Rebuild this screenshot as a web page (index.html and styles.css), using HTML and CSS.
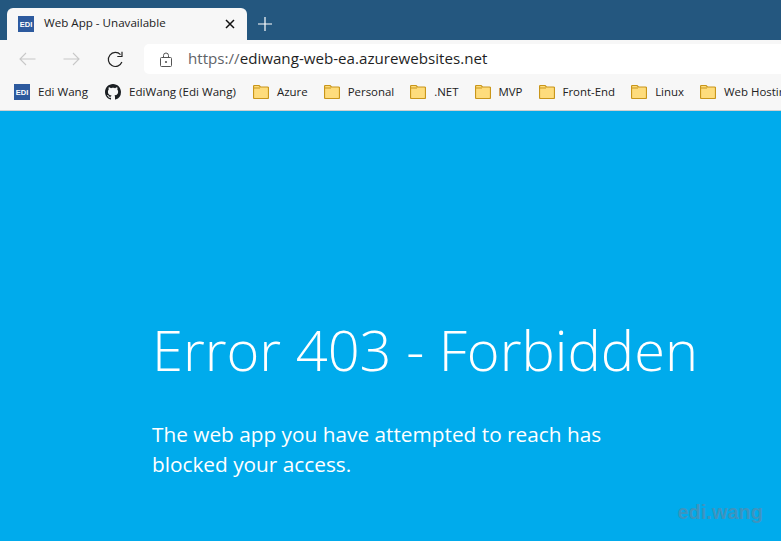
FILE: index.html
```html
<!DOCTYPE html>
<html lang="en">
<head>
<meta charset="utf-8">
<title>Web App - Unavailable</title>
<link rel="stylesheet" href="styles.css">
</head>
<body>
<svg class="defs" width="0" height="0"><defs><symbol id="folder" viewBox="0 0 16 14"><path d="M1.500.5h4.500l1.500 1.500h7a1 1 0 0 1 1 1v9.500a1 1 0 0 1-1 1h-13a1 1 0 0 1-1-1v-11a1 1 0 0 1 1-1z" fill="#fedc7c" stroke="#c9961a" stroke-width="1.200"/><path d="M1 3h6" stroke="#c9961a" fill="none"/></symbol></defs></svg>
<div class="window">
  <div class="tabstrip">
    <div class="tab">
      <span class="edi">EDI</span>
      <span class="tab-title">Web App - Unavailable</span>
      <svg class="tab-close" width="10" height="10" viewBox="0 0 10 10"><path d="M1 1l8 8M9 1l-8 8" stroke="#111" stroke-width="1.5" fill="none"/></svg>
    </div>
    <svg class="newtab" width="14" height="14" viewBox="0 0 14 14"><path d="M7 0v14M0 7h14" stroke="#fff" stroke-width="1.2" fill="none"/></svg>
  </div>
  <div class="toolbar">
    <svg class="nav" width="17" height="14" viewBox="0 0 17 14"><path d="M16.500 7H1M7 1L1 7l6 6" stroke="#c8c8c8" stroke-width="1.100" fill="none"/></svg>
    <svg class="nav nav-forward" width="17" height="14" viewBox="0 0 17 14"><path d="M.5 7H16M10 1l6 6-6 6" stroke="#c8c8c8" stroke-width="1.100" fill="none"/></svg>
    <svg class="nav nav-reload" width="17" height="17" viewBox="0 0 17 17"><path d="M14.900 11A7 7 0 1 1 13.500 3.700" stroke="#222" stroke-width="1.200" fill="none"/><path d="M15 .8v4.700h-4.700" stroke="#222" stroke-width="1.200" fill="none"/></svg>
    <div class="omnibox">
      <svg class="lock" width="12" height="15" viewBox="0 0 12 15"><path d="M3.500 5.500V3.500a2.500 2.500 0 0 1 5 0v2M1.500 5.500h9a1 1 0 0 1 1 1v7a1 1 0 0 1-1 1h-9a1 1 0 0 1-1-1v-7a1 1 0 0 1 1-1z" stroke="#555" stroke-width="1" fill="none"/><circle cx="6" cy="10" r="1.100" fill="#555"/></svg>
      <span class="url">https://<span class="url-host">ediwang-web-ea.azurewebsites.net</span></span>
    </div>
  </div>
  <div class="bookmarks">
    <span class="bm bm-link"><span class="edi">EDI</span><span class="bm-label">Edi Wang</span></span>
    <span class="bm bm-link"><svg width="16" height="16" viewBox="0 0 16 16"><path fill="#1b1f23" d="M8 0C3.580 0 0 3.580 0 8c0 3.540 2.290 6.530 5.470 7.590.4.070.55-.17.55-.38 0-.19-.01-.82-.01-1.490-2.010.37-2.530-.49-2.690-.94-.09-.23-.48-.94-.82-1.130-.28-.15-.68-.52-.01-.53.63-.01 1.080.58 1.230.82.72 1.210 1.870.87 2.330.66.070-.52.28-.87.51-1.070-1.780-.2-3.640-.89-3.640-3.950 0-.87.31-1.590.82-2.150-.08-.2-.36-1.020.08-2.120 0 0 .67-.21 2.200.82.64-.18 1.320-.27 2-.27s1.360.09 2 .27c1.530-1.040 2.200-.82 2.200-.82.44 1.100.16 1.920.08 2.120.51.56.82 1.270.82 2.150 0 3.070-1.870 3.750-3.650 3.950.29.25.54.73.54 1.480 0 1.070-.01 1.930-.01 2.200 0 .21.15.46.55.38A8.010 8.010 0 0 0 16 8c0-4.420-3.580-8-8-8z"/></svg><span class="bm-label">EdiWang (Edi Wang)</span></span>
    <span class="bm"><svg width="16" height="14"><use href="#folder"/></svg><span class="bm-label">Azure</span></span>
    <span class="bm"><svg width="16" height="14"><use href="#folder"/></svg><span class="bm-label">Personal</span></span>
    <span class="bm"><svg width="16" height="14"><use href="#folder"/></svg><span class="bm-label">.NET</span></span>
    <span class="bm"><svg width="16" height="14"><use href="#folder"/></svg><span class="bm-label">MVP</span></span>
    <span class="bm"><svg width="16" height="14"><use href="#folder"/></svg><span class="bm-label">Front-End</span></span>
    <span class="bm"><svg width="16" height="14"><use href="#folder"/></svg><span class="bm-label">Linux</span></span>
    <span class="bm"><svg width="16" height="14"><use href="#folder"/></svg><span class="bm-label">Web Hosting</span></span>
  </div>
  <main class="content">
    <h1 class="title">Error 403 - Forbidden</h1>
    <p class="message">The web app you have attempted to reach has blocked your access.</p>
    <span class="watermark">edi.wang</span>
  </main>
</div>
</body>
</html>
```

FILE: styles.css
```css
* { box-sizing: border-box; }
html, body { margin: 0; height: 100%; overflow: hidden; }
body { font-family: "Open Sans", "Noto Sans", sans-serif; }
.defs { display: block; }
.window { width: 781px; height: 541px; display: flex; flex-direction: column; overflow: hidden; }

.tabstrip { height: 40px; flex: none; background: #24577f; display: flex; align-items: flex-end; padding-left: 7px; }
.tab { width: 240px; height: 32px; background: #f7f7f7; border-radius: 6px 6px 0 0; display: flex; align-items: center; padding: 0 12px 0 11px; }
.tab-title { font-size: 11.600px; color: #222; margin-left: 10px; padding-bottom: 3px; flex: 1; white-space: nowrap; }
.tab-close { flex: none; }
.newtab { margin: 0 0 9px 11px; }

.edi { display: inline-flex; align-items: center; justify-content: center; flex: none; width: 16px; height: 16px; background: #2d5a9e; color: #fff; font-family: "Liberation Sans", sans-serif; font-size: 7.500px; font-weight: 700; }

.toolbar { height: 34px; flex: none; background: #f7f7f7; display: flex; align-items: center; padding: 4px 0 0 19px; }
.nav { flex: none; }
.nav-forward { margin-left: 27px; }
.nav-reload { margin-left: 27px; }
.omnibox { flex: 1; height: 30px; margin-left: 20px; background: #fff; border-radius: 5px 0 0 5px; display: flex; align-items: center; padding-left: 16px; }
.lock { flex: none; }
.url { margin-left: 16px; padding-bottom: 2px; font-size: 15.150px; color: #5f6368; white-space: nowrap; }
.url-host { color: #1f1f1f; }

.bookmarks { height: 37px; flex: none; background: #f7f7f7; border-bottom: 1px solid #d0d0d0; display: flex; align-items: center; padding-left: 14px; gap: 16px; white-space: nowrap; overflow: hidden; }
.bm { display: inline-flex; align-items: center; gap: 8px; font-size: 11.450px; color: #222; flex: none; }
.bm-link { font-size: 11.600px; margin-right: 1px; }
.bm-label { padding-bottom: 2px; }

.content { position: relative; flex: 1; background: #00abec; color: #fff; padding: 204px 0 0 152px; }
.title { margin: 0; font-size: 56px; font-weight: 300; line-height: 68px; white-space: nowrap; }
.message { margin: 36px 0 0; width: 480px; font-size: 20.800px; font-weight: 400; line-height: 30px; }
.watermark { position: absolute; right: 18px; bottom: 17px; font-family: "Liberation Sans", sans-serif; font-size: 20px; font-weight: 700; color: #4d8fb5; opacity: .8; }
```
